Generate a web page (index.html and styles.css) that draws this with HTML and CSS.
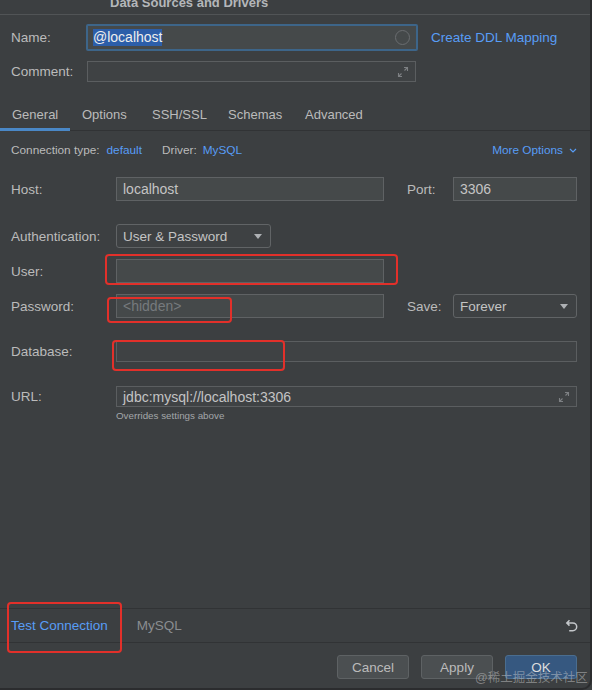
FILE: index.html
```html
<!DOCTYPE html>
<html>
<head>
    <title>Data Sources and Drivers</title>
    <meta name="viewport" content="width=device-width, initial-scale=1.0">
    <link rel="stylesheet" href="styles.css">
</head>
<body>
<div class="window">
    <div class="titlebar"><span class="title">Data Sources and Drivers</span></div>

    <!-- Name / Comment -->
    <div class="header">
        <div class="head-row">
            <label class="head-label">Name:</label>
            <div class="name-field">
                <span class="selected">@localhost</span>
                <span class="ring"></span>
            </div>
            <a class="link ddl">Create DDL Mapping</a>
        </div>
        <div class="head-row comment-row">
            <label class="head-label">Comment:</label>
            <div class="comment-field">
                <svg class="expand" width="12" height="12" viewBox="0 0 12 12">
                    <path d="M7 1.5h3.5V5M10.5 1.5L7.5 4.5M5 10.5H1.5V7M1.5 10.5L4.5 7.5" fill="none" stroke="#7d8083" stroke-width="1.1"/>
                </svg>
            </div>
        </div>
    </div>

    <!-- Tabs -->
    <div class="tabs">
        <div class="tab active">General</div>
        <div class="tab">Options</div>
        <div class="tab">SSH/SSL</div>
        <div class="tab">Schemas</div>
        <div class="tab">Advanced</div>
    </div>

    <div class="content">
        <div class="meta">
            <span>Connection type:</span>
            <a class="link conn-type">default</a>
            <span class="driver">Driver:</span>
            <a class="link driver-name">MySQL</a>
            <a class="link more">More Options
                <svg width="8" height="5" viewBox="0 0 8 5"><path d="M1 1l3 3 3-3" fill="none" stroke="#589df6" stroke-width="1.2"/></svg>
            </a>
        </div>

        <div class="row">
            <label class="label">Host:</label>
            <div class="field short">localhost</div>
            <label class="label side">Port:</label>
            <div class="field grow">3306</div>
        </div>

        <div class="row gap-big">
            <label class="label">Authentication:</label>
            <div class="select auth">User &amp; Password<span class="caret"></span></div>
        </div>

        <div class="row gap-small">
            <label class="label">User:</label>
            <div class="field short"></div>
        </div>

        <div class="row gap-small">
            <label class="label">Password:</label>
            <div class="field short placeholder">&lt;hidden&gt;</div>
            <label class="label side">Save:</label>
            <div class="select grow">Forever<span class="caret"></span></div>
        </div>

        <div class="row slim gap-big">
            <label class="label">Database:</label>
            <div class="field flat grow"></div>
        </div>

        <div class="row slim url-row">
            <label class="label">URL:</label>
            <div class="field flat grow">jdbc:mysql://localhost:3306
                <svg class="expand" width="12" height="12" viewBox="0 0 12 12">
                    <path d="M7 1.5h3.5V5M10.5 1.5L7.5 4.5M5 10.5H1.5V7M1.5 10.5L4.5 7.5" fill="none" stroke="#7d8083" stroke-width="1.1"/>
                </svg>
            </div>
        </div>
        <p class="note">Overrides settings above</p>
    </div>

    <div class="statusbar">
        <a class="link test">Test Connection</a>
        <span class="driver-tab">MySQL</span>
        <svg class="undo" width="13" height="13" viewBox="0 0 13 13">
            <path d="M4.5 1.2L1.8 3.9l2.7 2.7M1.8 3.9h6a3.9 3.9 0 0 1 0 7.8H4.2" fill="none" stroke="#c4c7ca" stroke-width="1.5"/>
        </svg>
    </div>

    <div class="buttons">
        <button class="btn">Cancel</button>
        <button class="btn">Apply</button>
        <button class="btn primary">OK</button>
    </div>

    <!-- red annotation boxes -->
    <div class="mark mark-user"></div>
    <div class="mark mark-pass"></div>
    <div class="mark mark-db"></div>
    <div class="mark mark-test"></div>

    <div class="watermark">@稀土掘金技术社区</div>
</div>
</body>
</html>
```

FILE: styles.css
```css
body {
    margin: 0;
    background-color: #3c3f41;
    font-family: "Liberation Sans", Arial, "Noto Sans CJK SC", sans-serif;
    font-size: 13.5px;
    color: #bbbbbb;
}

.window {
    position: relative;
    width: 592px;
    height: 690px;
    box-sizing: border-box;
    display: flex;
    flex-direction: column;
    border-right: 2px solid #2b2c2e;
    border-bottom: 2px solid #2b2c2e;
    border-bottom-right-radius: 10px;
    overflow: hidden;
}

.link {
    color: #589df6;
    cursor: pointer;
}

/* Title bar, cut off at the top */
.titlebar {
    height: 14px;
    flex-shrink: 0;
    overflow: hidden;
    border-bottom: 1px solid #515456;
    padding-left: 110px;
}

.title {
    display: block;
    margin-top: -5px;
    line-height: 16px;
    font-size: 13px;
    font-weight: bold;
    color: #b4b7ba;
}

/* Name / Comment */
.header {
    padding: 9px 0 0 11px;
}

.head-row {
    display: flex;
    align-items: center;
}

.head-label {
    width: 75px;
}

.name-field {
    width: 332px;
    height: 27px;
    box-sizing: border-box;
    border: 2px solid #3d6589;
    border-radius: 2px;
    background-color: #45494a;
    display: flex;
    align-items: center;
    padding-left: 5px;
    padding-right: 6px;
}

.selected {
    background-color: #2c5ea9;
    color: #eeeeee;
    font-size: 14px;
    line-height: 17px;
}

.ring {
    margin-left: auto;
    width: 13px;
    height: 13px;
    border: 1px solid #6a6d70;
    border-radius: 50%;
}

.ddl {
    margin-left: 13px;
}

.comment-row {
    margin-top: 10px;
}

.comment-field {
    margin-left: 1px;
    width: 329px;
    height: 21px;
    box-sizing: border-box;
    border: 1px solid #5b5e60;
    background-color: #3f4244;
    display: flex;
    align-items: center;
    justify-content: flex-end;
    padding-right: 6px;
}

/* Tabs */
.tabs {
    margin-top: 16px;
    height: 33px;
    box-sizing: border-box;
    display: flex;
    border-bottom: 1px solid #313335;
    font-size: 13px;
}

.tab {
    height: 33px;
    box-sizing: border-box;
    padding: 3px 0 0 12px;
    display: flex;
    align-items: center;
    border-bottom: 3px solid transparent;
}

.tab:nth-child(1) { width: 70px; }
.tab:nth-child(2) { width: 70px; }
.tab:nth-child(3) { width: 76px; }
.tab:nth-child(4) { width: 77px; }

.tab.active {
    border-bottom-color: #4a88c7;
}

/* Form */
.content {
    flex: 1;
    padding: 0 13px 0 11px;
}

.meta {
    margin-top: 12px;
    display: flex;
    align-items: center;
    font-size: 11.8px;
    line-height: 14px;
}

.conn-type {
    margin-left: 7px;
}

.driver {
    margin-left: 20px;
}

.driver-name {
    margin-left: 6px;
}

.more {
    margin-left: auto;
    display: flex;
    align-items: center;
    gap: 6px;
}

.row {
    display: flex;
    align-items: center;
    height: 24px;
    margin-top: 20px;
}

.row.gap-big {
    margin-top: 23px;
}

.row.gap-small {
    margin-top: 11px;
}

.row.slim {
    height: 21px;
}

.url-row {
    margin-top: 24px;
}

.label {
    width: 105px;
    flex-shrink: 0;
}

.label.side {
    width: 46px;
    margin-left: 23px;
}

.field,
.select {
    height: 100%;
    box-sizing: border-box;
    border: 1px solid #5f6264;
    background-color: #45494a;
    display: flex;
    align-items: center;
    padding: 0 6px;
    color: #c4c4c4;
}

.field {
    font-size: 14px;
}

.select {
    font-size: 13.5px;
}

.field.short {
    width: 268px;
}

.field.flat {
    background-color: #3f4244;
    border-color: #5b5e60;
}

.grow {
    flex: 1;
}

.placeholder {
    color: #767a7d;
}

.expand {
    margin-left: auto;
}

.select {
    border-radius: 3px;
    background-color: #3e4143;
    border-color: #616466;
}

.select.auth {
    width: 155px;
    flex: none;
}

.caret {
    margin-left: auto;
    width: 0;
    height: 0;
    border-left: 4.5px solid transparent;
    border-right: 4.5px solid transparent;
    border-top: 5px solid #aeb1b4;
    margin-right: 2px;
}

.note {
    margin: 2px 0 0 105px;
    font-size: 9.8px;
    line-height: 14px;
    color: #a3a6a9;
}

/* Bottom bar */
.statusbar {
    height: 35px;
    box-sizing: border-box;
    flex-shrink: 0;
    border-top: 1px solid #313335;
    border-bottom: 1px solid #313335;
    display: flex;
    align-items: center;
    padding: 0 12px 0 11px;
}

.driver-tab {
    margin-left: 29px;
    color: #8a8d90;
}

.undo {
    margin-left: auto;
}

.buttons {
    height: 45px;
    flex-shrink: 0;
    box-sizing: border-box;
    display: flex;
    justify-content: flex-end;
    gap: 12px;
    padding: 12px 13px 0 0;
}

.btn {
    width: 72px;
    height: 24px;
    background-color: #4b4f51;
    border: 1px solid #5e6264;
    border-radius: 3px;
    color: #bbbbbb;
    font-family: inherit;
    font-size: 13.5px;
    padding: 0;
}

.btn.primary {
    background-color: #365880;
    border-color: #4a6d8f;
    color: #dddddd;
}

/* Red annotation boxes drawn over the screenshot */
.mark {
    position: absolute;
    border: 2px solid #e2302a;
    border-radius: 4px;
    box-sizing: border-box;
}

.mark-user { left: 105px; top: 254px; width: 293px; height: 31px; }
.mark-pass { left: 107px; top: 297px; width: 125px; height: 26px; }
.mark-db   { left: 112px; top: 340px; width: 173px; height: 31px; }
.mark-test { left: 7px;   top: 602px; width: 115px; height: 51px; }

.watermark {
    position: absolute;
    left: 475px;
    top: 670px;
    font-size: 12.5px;
    line-height: 16px;
    color: rgba(215, 215, 215, 0.45);
    white-space: nowrap;
}
```
